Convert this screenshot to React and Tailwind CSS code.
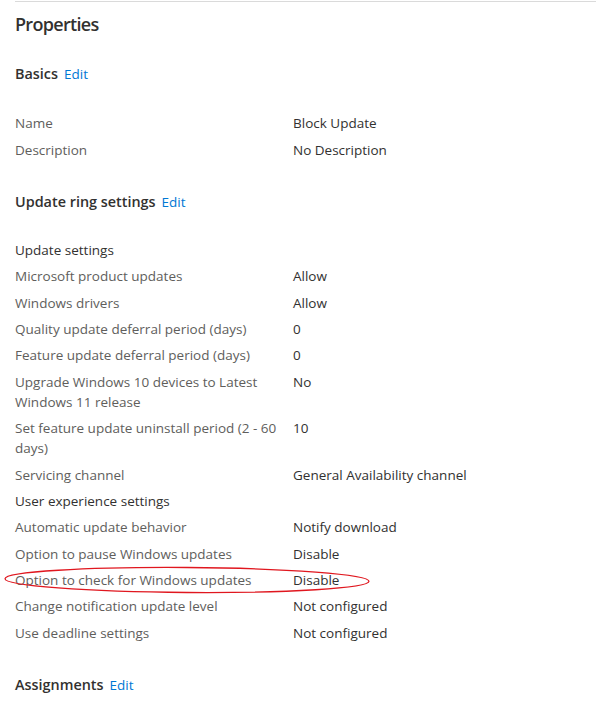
const font = { fontFamily: '"Segoe UI", "Open Sans", sans-serif' };

function Row({ label, value, strong }) {
  return (
    <div className="flex text-[13.5px] leading-[20px] py-[3.2px]">
      <div className={`w-[278px] shrink-0 pr-[12px] ${strong ? 'text-[#323130]' : 'text-[#605e5c]'}`}>{label}</div>
      <div className="text-[#323130]">{value}</div>
    </div>
  );
}

function Heading({ children }) {
  return (
    <div className="flex items-baseline gap-[6px] leading-[20px]">
      <span className="text-[14.4px] font-semibold text-[#323130]">{children}</span>
      <span className="text-[13.5px] text-[#0078d4]">Edit</span>
    </div>
  );
}

const settings = [
  ['Update settings', '', true],
  ['Microsoft product updates', 'Allow'],
  ['Windows drivers', 'Allow'],
  ['Quality update deferral period (days)', '0'],
  ['Feature update deferral period (days)', '0'],
  ['Upgrade Windows 10 devices to Latest Windows 11 release', 'No'],
  ['Set feature update uninstall period (2 - 60 days)', '10'],
  ['Servicing channel', 'General Availability channel'],
  ['User experience settings', '', true],
  ['Automatic update behavior', 'Notify download'],
  ['Option to pause Windows updates', 'Disable'],
  ['Option to check for Windows updates', 'Disable'],
  ['Change notification update level', 'Not configured'],
  ['Use deadline settings', 'Not configured'],
];

export default function App() {
  return (
    <div className="relative w-[596px] h-[701px] bg-white overflow-hidden" style={font}>
      <div className="ml-[15px] mt-px h-px bg-[#dadada]" />
      <div className="pl-[15px]">
        <h1 className="mt-[8px] text-[18px] leading-[28px] font-semibold tracking-[-0.7px] text-[#323130]">Properties</h1>
        <div className="mt-[26px]">
          <Heading>Basics</Heading>
        </div>
        <div className="mt-[26px]">
          <Row label="Name" value="Block Update" />
          <Row label="Description" value="No Description" />
        </div>
        <div className="mt-[29px]">
          <Heading>Update ring settings</Heading>
        </div>
        <div className="mt-[25px]">
          {settings.map(([l, v, s]) => (
            <Row key={l} label={l} value={v} strong={s} />
          ))}
        </div>
        <div className="mt-[29px]">
          <Heading>Assignments</Heading>
        </div>
      </div>
      <svg className="absolute left-0 top-[560px] pointer-events-none" width="380" height="40" viewBox="0 0 380 40">
        <ellipse cx="187" cy="20" rx="182" ry="12.5" fill="none" stroke="#e0171f" strokeWidth="1.3" transform="rotate(0.4 187 20)" />
      </svg>
    </div>
  );
}
